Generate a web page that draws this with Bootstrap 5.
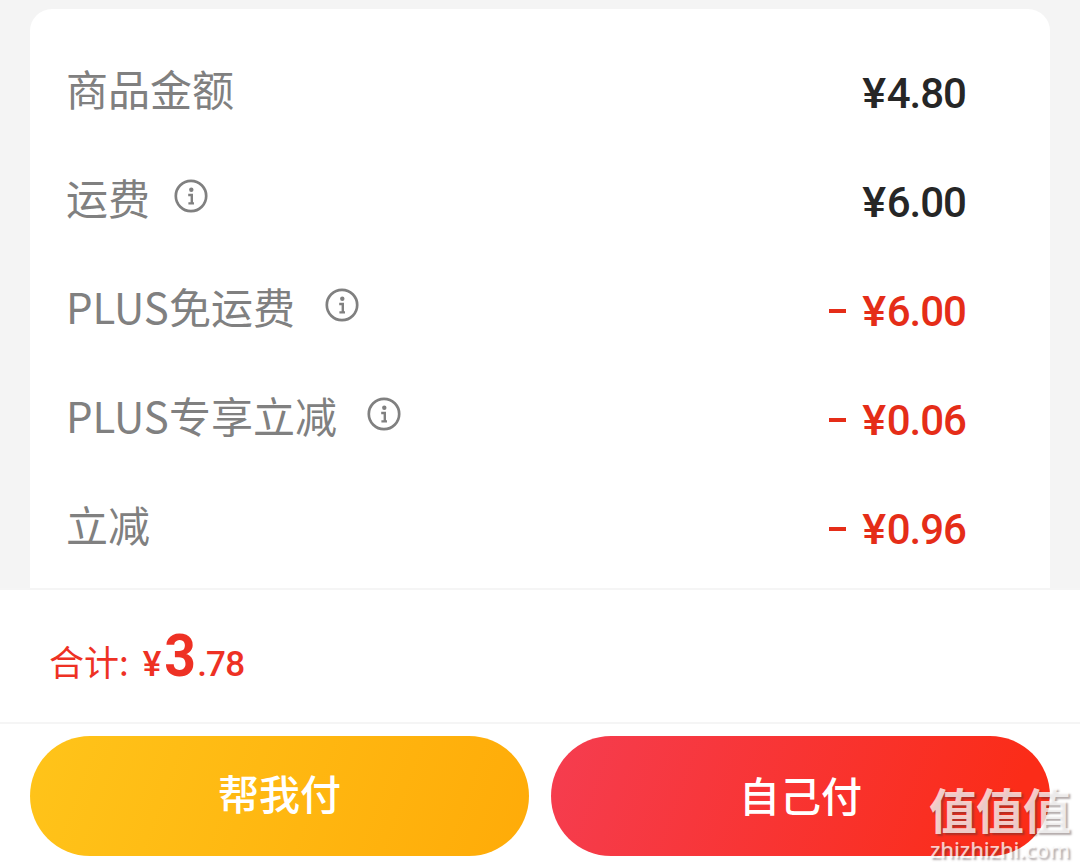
<!DOCTYPE html>
<html lang="zh-CN">

<head>
    <meta charset="UTF-8" />
    <meta name="viewport" content="width=device-width, initial-scale=1" />
    <title>结算</title>
    <link href="https://cdn.jsdelivr.net/npm/bootstrap@5.3.0/dist/css/bootstrap.min.css" rel="stylesheet" />
    <style>
        body {
            height: 868px;
            overflow: hidden;
            background: #f4f4f4;
            font-family: "Noto Sans CJK SC", sans-serif;
            color: #808080;
        }

        .price-card {
            height: 579px;
            margin: 9px 30px 0;
            padding: 27px 84px 0 36px;
            border-radius: 22px 22px 0 0;
        }

        .price-row {
            height: 109px;
            font-size: 42px;
            line-height: 60px;
        }

        .price-label {
            padding-bottom: 6px;
        }

        .info-icon {
            width: 34px;
            height: 34px;
            margin: 0 0 1px 24px;
        }

        .info-icon.wide {
            margin-left: 30px;
        }

        .amount {
            font-family: Roboto, sans-serif;
            font-weight: 500;
            font-size: 42px;
            letter-spacing: -1px;
            color: #262626;
            padding-top: 7px;
        }

        .amount.minus {
            color: #e52d18;
        }

        .yen {
            display: inline-block;
            margin-right: 2px;
            transform: scaleX(1.07);
        }

        .dash {
            width: 17px;
            height: 4px;
            margin: 0 17px 2px 0;
            background: #e52d18;
        }

        .total-bar {
            height: 134px;
            border-top: 2px solid #f5f5f5;
            padding: 36px 49px 0;
            color: #ee3124;
            font-size: 35px;
            line-height: 60px;
        }

        .total-price {
            font-family: Roboto, sans-serif;
            font-weight: 500;
            margin-left: 14px;
            letter-spacing: -.8px;
        }

        .total-price b {
            display: inline-block;
            margin: 0 1px 0 2px;
            font-size: 60px;
            font-weight: 700;
            transform: scaleX(.92);
        }

        .pay-bar {
            height: 146px;
            border-top: 2px solid #f5f5f5;
            padding: 12px 30px;
            gap: 22px;
        }

        .pay-btn {
            height: 120px;
            border: 0;
            color: #fff;
            font-size: 41px;
            font-weight: 500;
        }

        .pay-friend {
            padding-bottom: 12px;
            background: linear-gradient(110deg, #ffc41a, #ffab08);
        }

        .pay-self {
            padding-bottom: 8px;
            background: linear-gradient(110deg, #f53d50, #fb2c18 90%);
        }

        .site-mark {
            right: 8px;
            bottom: 1px;
            width: 142px;
            text-shadow: 2px 2px 2px rgba(70, 50, 50, .55);
        }
    </style>
</head>

<body>

    <main class="price-card bg-white">
        <div class="price-row d-flex justify-content-between align-items-center">
            <span class="price-label">商品金额</span>
            <span class="amount"><span class="yen">¥</span>4.80</span>
        </div>
        <div class="price-row d-flex justify-content-between align-items-center">
            <div class="price-label d-flex align-items-center">
                <span>运费</span>
                <svg class="info-icon" viewBox="0 0 34 34" fill="none" stroke="#808080">
                    <circle cx="17" cy="17" r="15.2" stroke-width="2.7" />
                    <circle cx="17.3" cy="10.8" r="2.2" fill="#808080" stroke="none" />
                    <path d="M14.2 16h3.6v8M14.4 24.4h5.6" stroke-width="2.4" />
                </svg>
            </div>
            <span class="amount"><span class="yen">¥</span>6.00</span>
        </div>
        <div class="price-row d-flex justify-content-between align-items-center">
            <div class="price-label d-flex align-items-center">
                <span>PLUS免运费</span>
                <svg class="info-icon wide" viewBox="0 0 34 34" fill="none" stroke="#808080">
                    <circle cx="17" cy="17" r="15.2" stroke-width="2.7" />
                    <circle cx="17.3" cy="10.8" r="2.2" fill="#808080" stroke="none" />
                    <path d="M14.2 16h3.6v8M14.4 24.4h5.6" stroke-width="2.4" />
                </svg>
            </div>
            <span class="amount minus d-flex align-items-center"><i class="dash"></i><span class="yen">¥</span>6.00</span>
        </div>
        <div class="price-row d-flex justify-content-between align-items-center">
            <div class="price-label d-flex align-items-center">
                <span>PLUS专享立减</span>
                <svg class="info-icon wide" viewBox="0 0 34 34" fill="none" stroke="#808080">
                    <circle cx="17" cy="17" r="15.2" stroke-width="2.7" />
                    <circle cx="17.3" cy="10.8" r="2.2" fill="#808080" stroke="none" />
                    <path d="M14.2 16h3.6v8M14.4 24.4h5.6" stroke-width="2.4" />
                </svg>
            </div>
            <span class="amount minus d-flex align-items-center"><i class="dash"></i><span class="yen">¥</span>0.06</span>
        </div>
        <div class="price-row d-flex justify-content-between align-items-center">
            <span class="price-label">立减</span>
            <span class="amount minus d-flex align-items-center"><i class="dash"></i><span class="yen">¥</span>0.96</span>
        </div>
    </main>

    <section class="total-bar bg-white d-flex align-items-baseline">
        <span>合计:</span>
        <span class="total-price">¥<b>3</b>.78</span>
    </section>

    <footer class="pay-bar bg-white d-flex">
        <button class="btn pay-btn pay-friend rounded-pill flex-fill w-50">帮我付</button>
        <button class="btn pay-btn pay-self rounded-pill flex-fill w-50">自己付</button>
    </footer>

    <!-- site watermark over the corner of the pay button -->
    <div class="site-mark position-absolute">
        <svg class="d-block overflow-visible" width="142" height="78">
            <g fill="#fff" fill-opacity=".75">
                <text x="-1" y="40" font-size="48" font-weight="700" textLength="142">值值值</text>
                <text x="0" y="69" font-family="Noto Sans" font-size="22" font-weight="500" textLength="140">zhizhizhi.com</text>
            </g>
        </svg>
    </div>

    <script src="https://cdn.jsdelivr.net/npm/bootstrap@5.3.0/dist/js/bootstrap.bundle.min.js"></script>
</body>

</html>
